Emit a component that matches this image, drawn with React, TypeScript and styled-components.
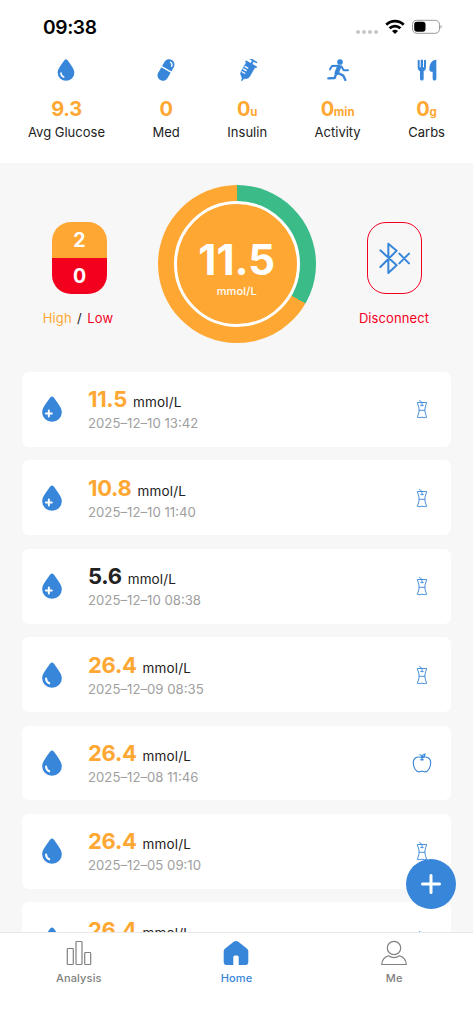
import type { ReactNode } from "react";
import styled, { createGlobalStyle } from "styled-components";

const BLUE = "#3786d9";
const ORANGE = "#ffa733";
const RED = "#f4001f";
const GREEN = "#3abb88";

const GlobalStyle = createGlobalStyle`
    * {
        box-sizing: border-box;
    }

    body {
        margin: 0;
        background: #f7f7f7;
        font-family: Inter, "Liberation Sans", sans-serif;
    }
`;

const Screen = styled.div`
    height: 1024px;
    display: flex;
    flex-direction: column;
    overflow: hidden;
    background: #f7f7f7;
    color: #222;
`;

const Header = styled.header`
    flex: none;
    height: 163px;
    background: #fff;
`;

const StatusBar = styled.div`
    height: 58px;
    padding: 15px 31px 0 43px;
    display: flex;
    align-items: flex-start;
    justify-content: space-between;
`;

const Time = styled.span`
    font-size: 19.2px;
    line-height: 24px;
    font-weight: 600;
    letter-spacing: -0.4px;
    color: #000;
`;

const StatusIcons = styled.div`
    display: flex;
    gap: 7px;
    padding-top: 4px;
`;

const Stats = styled.div`
    display: flex;
    justify-content: space-between;
    padding: 0 28px;
`;

const Stat = styled.div`
    display: flex;
    flex-direction: column;
    align-items: center;

    svg {
        display: block;
        margin-top: 1px;
    }
`;

const StatValue = styled.div`
    margin-top: 15px;
    height: 26px;
    line-height: 26px;
    font-size: 20px;
    font-weight: 650;
    letter-spacing: -0.3px;
    color: ${ORANGE};
    white-space: nowrap;

    small {
        font-size: 11.5px;
        letter-spacing: 0;
    }
`;

const StatLabel = styled.div`
    margin-top: 1px;
    font-size: 13px;
    line-height: 18px;
    white-space: nowrap;
`;

const Overview = styled.section`
    flex: none;
    height: 209px;
    padding: 22px 43px 0 43.5px;
    display: grid;
    grid-template-columns: 72px 1fr 72px;
`;

const Side = styled.div`
    display: flex;
    flex-direction: column;
    align-items: center;
    padding-top: 37px;
`;

const SideLabel = styled.div`
    margin-top: 14px;
    font-size: 13px;
    line-height: 20px;
    letter-spacing: 0.1px;
    white-space: nowrap;
`;

const RangeLabel = styled(SideLabel)`
    margin-right: 3px;
    letter-spacing: 0.15px;
    word-spacing: 1.5px;
`;

const Tint = styled.span<{ $color: string }>`
    color: ${(p) => p.$color};
`;

const Counter = styled.div`
    width: 55px;
    height: 72px;
    border-radius: 19px;
    overflow: hidden;
    display: grid;
    grid-template-rows: 1fr 1fr;
`;

const CounterCell = styled.div<{ $bg: string }>`
    display: flex;
    align-items: center;
    justify-content: center;
    background: ${(p) => p.$bg};
    color: #fff;
    font-size: 19.5px;
    font-weight: 650;
`;

const BluetoothBox = styled.div`
    width: 55px;
    height: 72px;
    border: 1px solid ${RED};
    border-radius: 19px;
    display: flex;
    align-items: center;
    justify-content: center;
`;

const Gauge = styled.div`
    justify-self: center;
    width: 158px;
    height: 158px;
    border-radius: 50%;
    padding: 16px;
    background: conic-gradient(${GREEN} 0 120deg, ${ORANGE} 120deg);
`;

const GaugeCenter = styled.div`
    height: 126px;
    border: 3.5px solid #fff;
    border-radius: 50%;
    background: ${ORANGE};
    color: #fff;
    display: flex;
    flex-direction: column;
    align-items: center;
    padding-top: 32px;
`;

const GaugeValue = styled.div`
    font-size: 42px;
    line-height: 48px;
    font-weight: 700;
`;

const GaugeUnit = styled.div`
    font-size: 11px;
    line-height: 14px;
    font-weight: 500;
    letter-spacing: 0.15px;
`;

const List = styled.main`
    flex: 1;
    min-height: 0;
    overflow: hidden;
    padding: 0 22px;
    display: flex;
    flex-direction: column;
    gap: 13.6px;
`;

const Card = styled.article`
    flex: none;
    height: 74.8px;
    border-radius: 7px;
    background: #fff;
    padding: 0 18px 0 17px;
    display: grid;
    grid-template-columns: 49px 1fr 22px;
    align-items: center;

    > svg:last-child {
        justify-self: center;
    }
`;

const Reading = styled.div`
    padding-top: 1px;
    white-space: nowrap;
`;

const Amount = styled.span<{ $normal?: boolean }>`
    font-size: 22px;
    line-height: 28px;
    font-weight: 650;
    letter-spacing: -0.3px;
    color: ${(p) => (p.$normal ? "#222" : ORANGE)};
`;

const Unit = styled.span`
    margin-left: 6px;
    font-size: 13.5px;
    letter-spacing: 0.15px;
`;

const Stamp = styled.div`
    font-size: 13.2px;
    line-height: 21px;
    color: #a0a0a0;
`;

const TabBar = styled.nav`
    position: relative;
    flex: none;
    height: 92px;
    background: #fff;
    border-top: 1px solid #e8e8e8;
    display: grid;
    grid-template-columns: repeat(3, 1fr);
`;

const Tab = styled.div<{ $active?: boolean }>`
    display: flex;
    flex-direction: column;
    align-items: center;
    padding-top: 7px;
    font-size: 11px;
    line-height: 14px;
    font-weight: 500;
    letter-spacing: 0.15px;
    color: ${(p) => (p.$active ? BLUE : "#808080")};

    svg {
        margin-bottom: 5px;
    }
`;

const AddButton = styled.button`
    position: absolute;
    right: 17px;
    top: -74px;
    width: 50px;
    height: 50px;
    padding: 0;
    border: 0;
    border-radius: 50%;
    background: ${BLUE};
    display: flex;
    align-items: center;
    justify-content: center;
`;

function DropIcon({ size = 22, plus }: { size?: number; plus?: boolean }) {
    return (
        <svg width={size} height={size} viewBox="0 0 66 66">
            <path
                d="M33 1c3 0 5 3 7 6 9 13 18 24 18 34a25 24.500 0 0 1-50 0C8 31 17 20 26 7c2-3 4-6 7-6z"
                fill={BLUE}
            />
            {plus ? (
                <path d="M25 37v15M17.500 44.500h15" stroke="#fff" strokeWidth="5" strokeLinecap="round" />
            ) : (
                <path d="M18 42c0 6 3 10 8 12" fill="none" stroke="#fff" strokeWidth="5" strokeLinecap="round" />
            )}
        </svg>
    );
}

function PillIcon() {
    return (
        <svg width="22" height="22" viewBox="0 0 66 66" fill="none">
            <g transform="rotate(30 33 33)">
                <rect x="17" y="-2" width="32" height="70" rx="16" fill={BLUE} />
                <path d="M15 31h36" stroke="#fff" strokeWidth="4" />
                <path d="M33 6q8 0 9 9" stroke="#fff" strokeWidth="4" strokeLinecap="round" />
            </g>
        </svg>
    );
}

function SyringeIcon() {
    return (
        <svg width="22" height="22" viewBox="0 0 66 66" fill="none" stroke={BLUE} strokeLinecap="round">
            <g transform="rotate(30 33 33)">
                <path d="M25 -1h21" strokeWidth="5" />
                <path d="M35 0v12" strokeWidth="6" />
                <path d="M18 12h34" strokeWidth="5.500" />
                <path d="M20 13h30v34q0 7-7 10l-4 4h-8l-4-4q-7-3-7-10z" fill={BLUE} strokeWidth="1" />
                <path d="M35 58v9" strokeWidth="5" />
                <path d="M23 27h9M23 36h9M23 45h9" stroke="#fff" strokeWidth="4" />
            </g>
        </svg>
    );
}

function RunIcon() {
    return (
        <svg
            width="22"
            height="22"
            viewBox="0 0 66 66"
            fill="none"
            stroke={BLUE}
            strokeLinecap="round"
            strokeLinejoin="round"
        >
            <circle cx="39" cy="9" r="8.500" fill={BLUE} stroke="none" />
            <path d="M9 31l6-10 21-1M43 22l7 12h13" strokeWidth="6" />
            <path d="M36 24l-7 18" strokeWidth="13" />
            <path d="M28 43l-5 14-19 1" strokeWidth="7" />
            <path d="M33 42l16 8 6 13" strokeWidth="7" />
        </svg>
    );
}

function UtensilsIcon() {
    return (
        <svg width="22" height="22" viewBox="0 0 66 66" fill={BLUE}>
            <path d="M5 5a3 3 0 0 1 6 0v20h3V5a3.500 3.500 0 0 1 7 0v20h3V5a3 3 0 0 1 6 0v20q0 9-7 12v22a5.500 5.500 0 0 1-11 0V37q-7-3-7-12z" />
            <path d="M61 2v57a5.500 5.500 0 0 1-11 0V38h-5q-5 0-5-7C40 14 48 2 61 2z" />
        </svg>
    );
}

function WifiIcon() {
    return (
        <svg width="20" height="16" viewBox="0 0 20 16" fill="none" stroke="#000" strokeWidth="2.700">
            <path d="M1.300 5.700a12.500 12.500 0 0 1 17.400 0M4.600 9.200a7.800 7.800 0 0 1 10.800 0" />
            <path d="M10 15l-3-3.100q3-2.500 6 0z" fill="#000" stroke="none" />
        </svg>
    );
}

function BatteryIcon() {
    return (
        <svg width="30" height="16" viewBox="0 0 30 16">
            <rect x=".5" y="1.300" width="27" height="13" rx="4.200" fill="none" stroke="#999" />
            <rect x="2.200" y="2.800" width="11.300" height="10" rx="2.800" />
            <path d="M28.600 5.800q2 2 0 4z" fill="#888" />
        </svg>
    );
}

function BluetoothIcon() {
    return (
        <svg
            width="32"
            height="33"
            viewBox="0 0 96 99"
            fill="none"
            stroke={BLUE}
            strokeWidth="6"
            strokeLinecap="round"
            strokeLinejoin="round"
        >
            <path d="M7 25l49 45-25 23V5l25 21L7 75M64 35l29 29M93 35L64 64" />
        </svg>
    );
}

function CoreIcon() {
    return (
        <svg width="20" height="20" viewBox="0 0 20 20" fill="none" stroke={BLUE} strokeWidth=".9">
            <path d="M5.300 3.500H14.700L13 9v4l1.600 5.300q-2.400.9-4.600-.2-2.200 1.100-4.600.2L7 13V9zM10 7V3.500L7.200 1.200M8.300 6.300q1.700 1 3.400 0M7 11.300h6" />
        </svg>
    );
}

function AppleIcon() {
    return (
        <svg width="20" height="20" viewBox="0 0 20 20" fill="none" stroke={BLUE} strokeWidth="1.100">
            <path d="M10 4.700C5 2.600 1.300 5.200 1.300 9.800c0 4.700 2.700 9.400 6.200 9 1-.1 1.600-.7 2.500-.7s1.500.6 2.500.7c3.500.4 6.200-4.300 6.200-9 0-4.600-3.700-7.200-8.700-5.100z" />
            <path d="M10 7V4q0-2.500 3-3 0 3-3 3M10 4Q9.500 2 7.500 1.500M8.300 6.500q1.700 1 3.400 0" />
        </svg>
    );
}

function ChartIcon() {
    return (
        <svg width="26" height="26" viewBox="0 0 26 26" fill="none" stroke="currentColor" strokeWidth="1.200">
            <rect x="1.300" y="8.500" width="6" height="16" rx=".8" />
            <rect x="10" y="1.500" width="6" height="23" rx=".8" />
            <rect x="18.700" y="12.500" width="6" height="12" rx=".8" />
        </svg>
    );
}

function HomeIcon() {
    return (
        <svg width="26" height="26" viewBox="0 0 26 26" fill="currentColor">
            <path d="M11 1.600q2-1.400 4 0l8.800 7q1.500 1 1.500 2.500V22q0 3-3 3h-6.600v-8q0-1.600-1.600-1.600h-2.200q-1.600 0-1.600 1.600v8H3.700q-3 0-3-3V11.100q0-1.500 1.500-2.500z" />
        </svg>
    );
}

function PersonIcon() {
    return (
        <svg
            width="26"
            height="26"
            viewBox="0 0 26 26"
            fill="none"
            stroke="currentColor"
            strokeWidth="1.200"
            strokeLinejoin="round"
        >
            <circle cx="13" cy="8" r="6.700" />
            <path d="M7.500 15.800C3.500 17 1 20.500.7 24.500h24.600c-.3-4-2.800-7.500-6.800-8.700-3.400 2.300-7.600 2.300-11 0z" />
        </svg>
    );
}

interface StatItem {
    label: string;
    value: string;
    unit?: string;
    icon: ReactNode;
}

const stats: StatItem[] = [
    { label: "Avg Glucose", value: "9.3", icon: <DropIcon /> },
    { label: "Med", value: "0", icon: <PillIcon /> },
    { label: "Insulin", value: "0", unit: "u", icon: <SyringeIcon /> },
    { label: "Activity", value: "0", unit: "min", icon: <RunIcon /> },
    { label: "Carbs", value: "0", unit: "g", icon: <UtensilsIcon /> },
];

interface Entry {
    amount: string;
    stamp: string;
    plus?: boolean;
    normal?: boolean;
    beforeMeal?: boolean;
}

const entries: Entry[] = [
    { amount: "11.5", stamp: "2025–12–10 13:42", plus: true },
    { amount: "10.8", stamp: "2025–12–10 11:40", plus: true },
    { amount: "5.6", stamp: "2025–12–10 08:38", plus: true, normal: true },
    { amount: "26.4", stamp: "2025–12–09 08:35" },
    { amount: "26.4", stamp: "2025–12–08 11:46", beforeMeal: true },
    { amount: "26.4", stamp: "2025–12–05 09:10" },
    { amount: "26.4", stamp: "2025–12–05 08:52" },
];

export default function App() {
    return (
        <Screen>
            <GlobalStyle />

            <Header>
                <StatusBar>
                    <Time>09:38</Time>
                    <StatusIcons>
                        <svg width="22" height="16" viewBox="0 0 22 16" fill="#c6c6c6">
                            {[2, 8, 14, 20].map((x) => (
                                <circle key={x} cx={x} cy="13" r="2" />
                            ))}
                        </svg>
                        <WifiIcon />
                        <BatteryIcon />
                    </StatusIcons>
                </StatusBar>

                <Stats>
                    {stats.map((s) => (
                        <Stat key={s.label}>
                            {s.icon}
                            <StatValue>
                                {s.value}
                                {s.unit && <small>{s.unit}</small>}
                            </StatValue>
                            <StatLabel>{s.label}</StatLabel>
                        </Stat>
                    ))}
                </Stats>
            </Header>

            <Overview>
                <Side>
                    <Counter>
                        <CounterCell $bg={ORANGE}>2</CounterCell>
                        <CounterCell $bg={RED}>0</CounterCell>
                    </Counter>
                    <RangeLabel>
                        <Tint $color={ORANGE}>High</Tint> / <Tint $color={RED}>Low</Tint>
                    </RangeLabel>
                </Side>

                <Gauge>
                    <GaugeCenter>
                        <GaugeValue>11.5</GaugeValue>
                        <GaugeUnit>mmol/L</GaugeUnit>
                    </GaugeCenter>
                </Gauge>

                <Side>
                    <BluetoothBox>
                        <BluetoothIcon />
                    </BluetoothBox>
                    <SideLabel>
                        <Tint $color={RED}>Disconnect</Tint>
                    </SideLabel>
                </Side>
            </Overview>

            <List>
                {entries.map((e) => (
                    <Card key={e.stamp}>
                        <DropIcon size={26} plus={e.plus} />
                        <Reading>
                            <Amount $normal={e.normal}>{e.amount}</Amount>
                            <Unit>mmol/L</Unit>
                            <Stamp>{e.stamp}</Stamp>
                        </Reading>
                        {e.beforeMeal ? <AppleIcon /> : <CoreIcon />}
                    </Card>
                ))}
            </List>

            <TabBar>
                <Tab>
                    <ChartIcon />
                    Analysis
                </Tab>
                <Tab $active>
                    <HomeIcon />
                    Home
                </Tab>
                <Tab>
                    <PersonIcon />
                    Me
                </Tab>
                <AddButton aria-label="Add">
                    <svg width="22" height="22" viewBox="0 0 22 22" stroke="#fff" strokeWidth="3" strokeLinecap="round">
                        <path d="M11 2.500v17M2.500 11h17" />
                    </svg>
                </AddButton>
            </TabBar>
        </Screen>
    );
}
